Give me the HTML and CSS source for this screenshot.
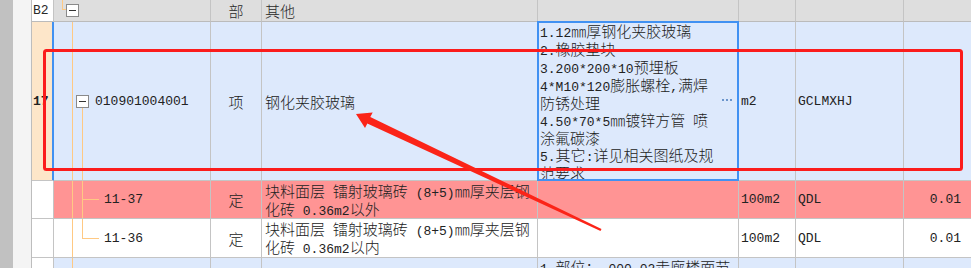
FILE: index.html
```html
<!DOCTYPE html>
<html lang="zh-CN">
<head>
<meta charset="utf-8">
<title>清单</title>
<link rel="stylesheet" href="styles.css">
</head>
<body>
<div class="sheet">
  <div class="strip-dark"></div>
  <div class="strip-light"></div>

  <div class="c hd rh"><span class="m">B2</span></div>
  <div class="c hd tree tree-h"><span class="tog tog-h"></span></div>
  <div class="c hd ctr">部</div>
  <div class="c hd name">其他</div>
  <div class="c hd"></div>
  <div class="c hd"></div>
  <div class="c hd"></div>
  <div class="c hd last"></div>

  <div class="c rh peach sel-rh"><b class="m">17</b></div>
  <div class="c blue tree tree-17"><span class="tog"></span><span class="m">010901004001</span></div>
  <div class="c blue ctr">项</div>
  <div class="c blue name">钢化夹胶玻璃</div>
  <div class="c blue desc active">
    <span class="m">1.12</span>㎜厚钢化夹胶玻璃<br>
    <span class="m">2.</span>橡胶垫块<br>
    <span class="m">3.200*200*10</span>预埋板<br>
    <span class="m">4*M10*120</span>膨胀螺栓<span class="m">,</span>满焊<br>
    防锈处理<br>
    <span class="m">4.50*70*5</span>㎜镀锌方管<span class="m"> </span>喷<br>
    涂氟碳漆<br>
    <span class="m">5.</span>其它<span class="m">:</span>详见相关图纸及规<br>
    范要求
    <span class="more"><svg width="10" height="3" viewBox="0 0 10 3"><rect x="0" y="0" width="2" height="2"/><rect x="4" y="0" width="2" height="2"/><rect x="8" y="0" width="2" height="2"/></svg></span>
  </div>
  <div class="c blue"><span class="m">m2</span></div>
  <div class="c blue"><span class="m">GCLMXHJ</span></div>
  <div class="c blue last"></div>

  <div class="c rh"></div>
  <div class="c pink tree tree-a sub"><span class="m">11-37</span></div>
  <div class="c pink ctr">定</div>
  <div class="c pink name"><div>块料面层<span class="m"> </span>镭射玻璃砖<span class="m"> (8+5)</span>㎜厚夹层钢<br>化砖<span class="m"> 0.36m2</span>以外</div></div>
  <div class="c pink"></div>
  <div class="c pink"><span class="m">100m2</span></div>
  <div class="c pink"><span class="m">QDL</span></div>
  <div class="c pink num last"><span class="m">0.01</span></div>

  <div class="c rh"></div>
  <div class="c white tree tree-b sub"><span class="m">11-36</span></div>
  <div class="c white ctr">定</div>
  <div class="c white name"><div>块料面层<span class="m"> </span>镭射玻璃砖<span class="m"> (8+5)</span>㎜厚夹层钢<br>化砖<span class="m"> 0.36m2</span>以内</div></div>
  <div class="c white"></div>
  <div class="c white"><span class="m">100m2</span></div>
  <div class="c white"><span class="m">QDL</span></div>
  <div class="c white num last"><span class="m">0.01</span></div>

  <div class="c rh"></div>
  <div class="c blue tree tree-c"></div>
  <div class="c blue"></div>
  <div class="c blue"></div>
  <div class="c blue desc"><span class="m">1.</span>部位：<span class="m"> 000-02</span>走廊楼面节</div>
  <div class="c blue"></div>
  <div class="c blue"></div>
  <div class="c blue last"></div>
</div>

<svg class="marks" width="971" height="268" viewBox="0 0 971 268">
  <rect x="44.5" y="50.5" width="917" height="119" rx="2" fill="none" stroke="#fb1c1c" stroke-width="3"/>
  <polygon points="356,114 372.7,112.5 370.3,117.1 601.5,229 600.5,231 367.3,123.5 365,128" fill="#fb2418"/>
</svg>
</body>
</html>
```

FILE: styles.css
```css
* { box-sizing: border-box; }

body {
  margin: 0;
  width: 971px;
  height: 268px;
  overflow: hidden;
  position: relative;
  background: #fff;
  color: #222;
  font-family: "Noto Sans CJK SC", "Noto Sans", sans-serif;
  font-size: 15px;
  line-height: 17px;
  font-weight: 300;
}

.m {
  font-family: "Liberation Mono", "DejaVu Sans Mono", monospace;
  font-size: 13px;
  line-height: 1;
  font-weight: 400;
}

b.m { font-weight: 700; }

.sheet {
  --t: #ffc983;
  display: grid;
  grid-template-columns: 13px 19px 22px 157px 51px 276px 201px 57px 108px 1fr;
  grid-template-rows: 22px 159px 38px 39px 40px;
}

.strip-dark { grid-row: 1 / -1; background: #c1c1c1; }
.strip-light { grid-row: 1 / -1; background: #f4f4f4; border-right: 1px solid #bdbdbd; }

.c {
  display: flex;
  align-items: center;
  min-width: 0;
  padding: 0 2px;
  white-space: nowrap;
  overflow: hidden;
  border-right: 1px solid #c4c4c4;
  border-bottom: 1px solid #c4c4c4;
}

.hd { background: #dedede; color: #2a2a2a; border-bottom-color: #bbbbbb; }
.hd.rh { background: #fff; }
.rh { background: #fff; padding-left: 1px; }
.peach { background: #fde6c9; }
.blue { background: #dde9fc; }
.pink { background: #ff9494; }
.white { background: #fff; }
.ctr { justify-content: center; }
.num { justify-content: flex-end; padding-right: 10px; }
.last { border-right: none; }
.name { padding-left: 3px; }

.sel-rh {
  border-right-color: #4191f2;
  box-shadow: inset -1px 0 0 #4191f2;
}

.tog {
  display: inline-block;
  flex: none;
  width: 13px;
  height: 13px;
  border: 1px solid #8a8a8a;
  background: linear-gradient(#333, #333) center / 7px 1px no-repeat, #fff;
}

.tree { padding-left: 22px; gap: 6px; }
.tree.sub { padding-left: 50px; }

.tree-h {
  padding-left: 12px;
  background:
    linear-gradient(var(--t), var(--t)) 8px 0 / 1px 10px no-repeat,
    linear-gradient(var(--t), var(--t)) 8px 9px / 4px 1px no-repeat,
    #dedede;
}

.tree-17 {
  background:
    linear-gradient(var(--t), var(--t)) 18px 0 / 1px 100% no-repeat,
    linear-gradient(var(--t), var(--t)) 28px 85px / 1px 100% no-repeat,
    #dde9fc;
}

.tree-a {
  background:
    linear-gradient(var(--t), var(--t)) 18px 0 / 1px 100% no-repeat,
    linear-gradient(var(--t), var(--t)) 28px 0 / 1px 100% no-repeat,
    linear-gradient(var(--t), var(--t)) 28px 18px / 17px 1px no-repeat,
    #ff9494;
}

.tree-b {
  background:
    linear-gradient(var(--t), var(--t)) 18px 0 / 1px 100% no-repeat,
    linear-gradient(var(--t), var(--t)) 28px 0 / 1px 20px no-repeat,
    linear-gradient(var(--t), var(--t)) 28px 19px / 17px 1px no-repeat,
    #fff;
}

.tree-c {
  background:
    linear-gradient(var(--t), var(--t)) 18px 0 / 1px 100% no-repeat,
    #dde9fc;
}

.desc {
  display: block;
  padding: 0 2px;
  overflow: visible;
  position: relative;
}

.active::after {
  content: "";
  position: absolute;
  inset: -1px;
  border: 2px solid #4191f2;
}

.more {
  position: absolute;
  right: 6px;
  top: 77px;
  line-height: 0;
}
.more svg { fill: #6b95cc; display: block; }

.marks {
  position: absolute;
  left: 0;
  top: 0;
  pointer-events: none;
}
```
